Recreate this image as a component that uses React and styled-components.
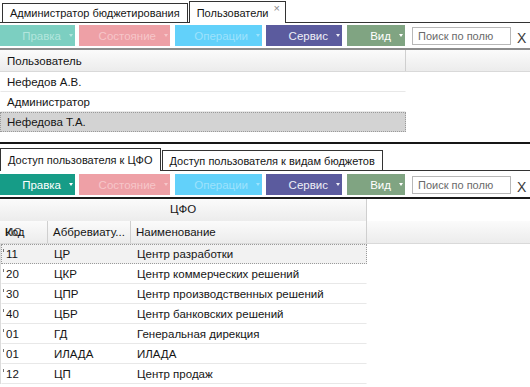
import styled, { createGlobalStyle } from "styled-components";

const GlobalStyle = createGlobalStyle`
  * { box-sizing: border-box; }
  html, body { margin: 0; padding: 0; background: #fff; }
  body {
    font-family: "Liberation Sans", Arial, sans-serif;
    font-size: 11.5px;
    color: #151515;
  }
`;

const Page = styled.div`
  width: 530px;
  height: 387px;
  overflow: hidden;
  display: flex;
  flex-direction: column;
  background: #fff;
`;

const Section = styled.div`
  display: flex;
  flex-direction: column;
  flex: none;
  height: ${(p) => (p.$height ? `${p.$height}px` : "auto")};
  border-bottom: ${(p) => (p.$closed ? "2px solid #161616" : "none")};
`;

const TabStrip = styled.div`
  display: flex;
  align-items: flex-end;
  gap: 1px;
  flex: none;
  height: ${(p) => p.$height}px;
  padding-left: ${(p) => p.$indent || 0}px;
  border-bottom: 1px solid #333;
`;

const Tab = styled.div`
  display: flex;
  align-items: center;
  height: ${(p) => (p.$active ? p.$tall : p.$tall - 3)}px;
  margin-bottom: ${(p) => (p.$active ? "-1px" : "0")};
  padding: 0 7px 0 7px;
  border: 1px solid #333;
  border-bottom: none;
  background: #fff;
  font-size: 11px;
  white-space: nowrap;
  position: relative;
  z-index: ${(p) => (p.$active ? 1 : 0)};
`;

const TabClose = styled.span`
  align-self: flex-start;
  margin: 1px -2px 0 5px;
  font-size: 11px;
  line-height: 11px;
  color: #8a8a8a;
`;

const Toolbar = styled.div`
  display: flex;
  align-items: stretch;
  flex: none;
  height: 21px;
  margin-top: ${(p) => p.$top}px;
`;

const ToolButton = styled.div`
  display: flex;
  align-items: center;
  justify-content: flex-end;
  width: ${(p) => p.$w}px;
  margin-right: ${(p) => p.$gap || 0}px;
  padding-right: 2px;
  background: ${(p) => p.$bg};
  color: ${(p) => p.$fg};
  font-size: 11.5px;
`;

const Caret = styled.span`
  width: 0;
  height: 0;
  margin-left: 8px;
  border-left: 2.5px solid transparent;
  border-right: 2.5px solid transparent;
  border-top: 3px solid ${(p) => p.$color};
`;

const Search = styled.input`
  width: 99px;
  height: 18px;
  margin: 2px 0 0 7px;
  padding: 0 0 0 5px;
  border: 1px solid #b8b8b8;
  font-family: "Liberation Sans", Arial, sans-serif;
  font-size: 11px;
  color: #333;
  outline: none;

  &::placeholder {
    color: #6a6a6a;
  }
`;

const ClearX = styled.span`
  display: flex;
  align-items: center;
  margin: 4px 0 0 6px;
  font-size: 14px;
  color: #3a3a3a;
`;

const Rule = styled.div`
  flex: none;
  height: 2px;
  margin-top: ${(p) => p.$top}px;
  background: ${(p) => p.$color};
`;

const HeaderRow = styled.div`
  display: flex;
  flex: none;
  height: ${(p) => p.$h}px;
  background: ${(p) =>
    p.$plain ? "#fff" : "linear-gradient(#fbfbfb, #ececec)"};
  border-bottom: ${(p) => (p.$plain ? "none" : "1px solid #d9d9d9")};
`;

const HeaderCell = styled.div`
  display: flex;
  align-items: center;
  justify-content: ${(p) => (p.$center ? "center" : "flex-start")};
  width: ${(p) => p.$w}px;
  flex: none;
  padding-left: ${(p) => (p.$center ? 0 : p.$pad)}px;
  padding-bottom: ${(p) => p.$lift || 0}px;
  background: ${(p) => (p.$shade ? "linear-gradient(#fbfbfb, #ececec)" : "transparent")};
  border-right: ${(p) => (p.$line ? "1px solid #cfcfcf" : "none")};
  white-space: nowrap;
  overflow: hidden;
  position: relative;
`;

const Ghost = styled.span`
  position: absolute;
  left: 5px;
  opacity: 0.8;
`;

const Body = styled.div`
  display: flex;
  flex-direction: column;
  border-left: ${(p) => (p.$edge ? "1px solid #dcdcdc" : "none")};
`;

const Row = styled.div`
  display: flex;
  align-items: center;
  width: ${(p) => p.$w}px;
  height: 20px;
  flex: none;
  background: ${(p) => p.$bg || "#fff"};
  border: 1px dotted ${(p) => (p.$focus ? "#9a9a9a" : "transparent")};
  border-bottom-color: ${(p) => (p.$focus ? "#9a9a9a" : "#e8e8e8")};
  border-bottom-style: ${(p) => (p.$focus ? "dotted" : "solid")};
`;

const Cell = styled.div`
  width: ${(p) => p.$w}px;
  flex: none;
  padding-left: ${(p) => p.$pad}px;
  white-space: nowrap;
  overflow: hidden;
  position: relative;
`;

const Tick = styled.span`
  position: absolute;
  left: 1px;
  top: 1px;
  width: 1px;
  height: 3px;
  background: #777;
`;

const faded = {
  edit: { bg: "#7ccfc1", fg: "#b3e6dd" },
  state: { bg: "#eea0a6", fg: "#f6c6c9" },
  ops: { bg: "#62d1fa", fg: "#9de2fc" },
};

const live = {
  edit: { bg: "#169c87", fg: "#ffffff" },
  service: { bg: "#5b5b9e", fg: "#eeeef6" },
  view: { bg: "#80a482", fg: "#ffffff" },
};

const ActionBar = ({ top, editLive }) => {
  const edit = editLive ? live.edit : faded.edit;
  const buttons = [
    { label: "Правка", w: 75, gap: 4, ...edit },
    { label: "Состояние", w: 91, gap: 5, ...faded.state },
    { label: "Операции", w: 87, gap: 4, ...faded.ops },
    { label: "Сервис", w: 76, gap: 5, ...live.service },
    { label: "Вид", w: 58, gap: 0, ...live.view },
  ];
  return (
    <Toolbar $top={top}>
      {buttons.map((b) => (
        <ToolButton key={b.label} $w={b.w} $gap={b.gap} $bg={b.bg} $fg={b.fg}>
          {b.label}
          <Caret $color={b.fg} />
        </ToolButton>
      ))}
      <Search placeholder="Поиск по полю" />
      <ClearX>X</ClearX>
    </Toolbar>
  );
};

const users = ["Нефедов А.В.", "Администратор", "Нефедова Т.А."];

const cfo = [
  ["11", "ЦР", "Центр разработки"],
  ["20", "ЦКР", "Центр коммерческих решений"],
  ["30", "ЦПР", "Центр производственных решений"],
  ["40", "ЦБР", "Центр банковских решений"],
  ["01", "ГД", "Генеральная дирекция"],
  ["01", "ИЛАДА", "ИЛАДА"],
  ["12", "ЦП", "Центр продаж"],
];

export default function App() {
  return (
    <Page>
      <GlobalStyle />
      <Section $height={144} $closed>
        <TabStrip $height={23} $indent={2}>
          <Tab $tall={22}>Администратор бюджетирования</Tab>
          <Tab $tall={22} $active>
            Пользователи
            <TabClose>×</TabClose>
          </Tab>
        </TabStrip>
        <ActionBar top={2} />
        <Rule $top={2} $color="#8c8c8c" />
        <HeaderRow $h={22}>
          <HeaderCell $w={406} $pad={7} $line>
            Пользователь
          </HeaderCell>
        </HeaderRow>
        <Body>
          {users.map((u, i) => (
            <Row
              key={u}
              $w={406}
              $bg={i === 2 ? "#d3d3d3" : "#fff"}
              $focus={i === 2}
            >
              <Cell $w={400} $pad={6}>
                {u}
              </Cell>
            </Row>
          ))}
        </Body>
      </Section>

      <Section>
        <TabStrip $height={27}>
          <Tab $tall={23} $active>
            Доступ пользователя к ЦФО
          </Tab>
          <Tab $tall={23}>Доступ пользователя к видам бюджетов</Tab>
        </TabStrip>
        <ActionBar top={3} editLive />
        <Rule $top={2} $color="#1a1a1a" />
        <HeaderRow $h={22} $plain>
          <HeaderCell $w={367} $center $shade $line $lift={3}>
            ЦФО
          </HeaderCell>
        </HeaderRow>
        <HeaderRow $h={23}>
          <HeaderCell $w={48} $pad={5} $line>
            <Ghost>ИС</Ghost>
            Код
          </HeaderCell>
          <HeaderCell $w={83} $pad={5} $line>
            Аббревиату...
          </HeaderCell>
          <HeaderCell $w={236} $pad={5} $line>
            Наименование
          </HeaderCell>
        </HeaderRow>
        <Body $edge>
          {cfo.map(([code, abbr, name], i) => (
            <Row
              key={code + abbr}
              $w={366}
              $bg={i === 0 ? "#f2f2f2" : "#fff"}
              $focus={i === 0}
            >
              <Cell $w={47} $pad={4}>
                <Tick />
                {code}
              </Cell>
              <Cell $w={83} $pad={5}>
                {abbr}
              </Cell>
              <Cell $w={234} $pad={5}>
                {name}
              </Cell>
            </Row>
          ))}
        </Body>
      </Section>
    </Page>
  );
}
